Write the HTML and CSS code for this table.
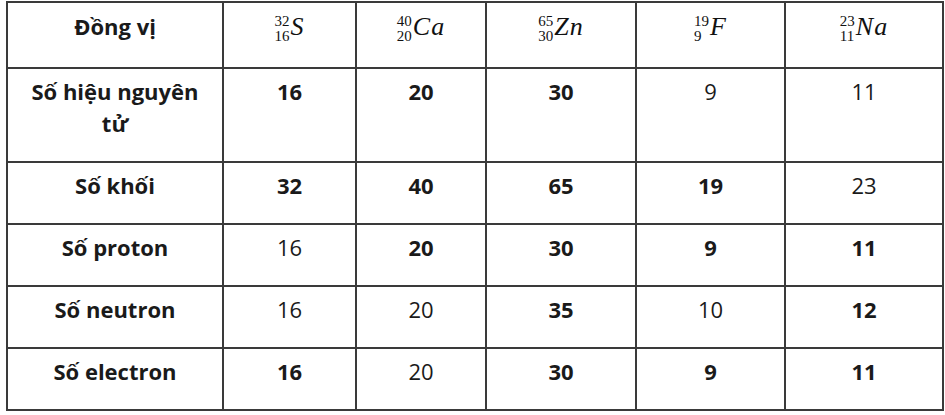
FILE: index.html
```html
<!DOCTYPE html>
<html lang="vi">
<head>
<meta charset="utf-8">
<title>Đồng vị</title>
<link rel="stylesheet" href="styles.css">
</head>
<body>
<table class="iso-table">
  <colgroup>
    <col class="c1"><col class="c2"><col class="c3"><col class="c4"><col class="c5"><col class="c6">
  </colgroup>
  <thead>
    <tr class="head">
      <th>Đồng vị</th>
      <th><span class="iso"><span class="scripts"><span class="sup">32</span><span class="sub">16</span></span><span class="base">S</span></span></th>
      <th><span class="iso"><span class="scripts"><span class="sup">40</span><span class="sub">20</span></span><span class="base">Ca</span></span></th>
      <th><span class="iso"><span class="scripts"><span class="sup">65</span><span class="sub">30</span></span><span class="base">Zn</span></span></th>
      <th><span class="iso"><span class="scripts"><span class="sup">19</span><span class="sub">9</span></span><span class="base">F</span></span></th>
      <th><span class="iso"><span class="scripts"><span class="sup">23</span><span class="sub">11</span></span><span class="base">Na</span></span></th>
    </tr>
  </thead>
  <tbody>
    <tr>
      <th>Số hiệu nguyên tử</th>
      <td class="b">16</td><td class="b">20</td><td class="b">30</td><td>9</td><td>11</td>
    </tr>
    <tr>
      <th>Số khối</th>
      <td class="b">32</td><td class="b">40</td><td class="b">65</td><td class="b">19</td><td>23</td>
    </tr>
    <tr>
      <th>Số proton</th>
      <td>16</td><td class="b">20</td><td class="b">30</td><td class="b">9</td><td class="b">11</td>
    </tr>
    <tr>
      <th>Số neutron</th>
      <td>16</td><td>20</td><td class="b">35</td><td>10</td><td class="b">12</td>
    </tr>
    <tr>
      <th>Số electron</th>
      <td class="b">16</td><td>20</td><td class="b">30</td><td class="b">9</td><td class="b">11</td>
    </tr>
  </tbody>
</table>
</body>
</html>
```

FILE: styles.css
```css
html, body {
  margin: 0;
  padding: 0;
  background: #ffffff;
}

body {
  padding: 0 0 0 5px;
  font-family: "Open Sans", "Noto Sans", sans-serif;
  color: #1a1a1a;
}

.iso-table {
  border-collapse: collapse;
  table-layout: fixed;
  width: 936px;
  margin-left: 1px;
  margin-top: 1px;
}

.c1 { width: 216px; }
.c2 { width: 133px; }
.c3 { width: 130px; }
.c4 { width: 150px; }
.c5 { width: 149px; }
.c6 { width: 158px; }

.iso-table th,
.iso-table td {
  border: 2px solid #3a3a3a;
  text-align: center;
  vertical-align: top;
  font-size: 22px;
  line-height: 32px;
  padding: 6px 12px 22px;
}

.iso-table th {
  font-weight: 700;
}

.iso-table td {
  font-weight: 400;
}

.iso-table td.b {
  font-weight: 700;
}

.head th {
  padding-top: 7px;
  padding-bottom: 23px;
}

.iso {
  white-space: nowrap;
  font-family: "Liberation Serif", "Times New Roman", serif;
  font-weight: 400;
  color: #111;
}

.scripts {
  display: inline-block;
  vertical-align: -6px;
  text-align: left;
  font-size: 15px;
  line-height: 15px;
  margin-right: 1px;
}

.sup,
.sub {
  display: block;
}

.base {
  font-style: italic;
  font-size: 26px;
  line-height: 25px;
  letter-spacing: 1px;
}
```
